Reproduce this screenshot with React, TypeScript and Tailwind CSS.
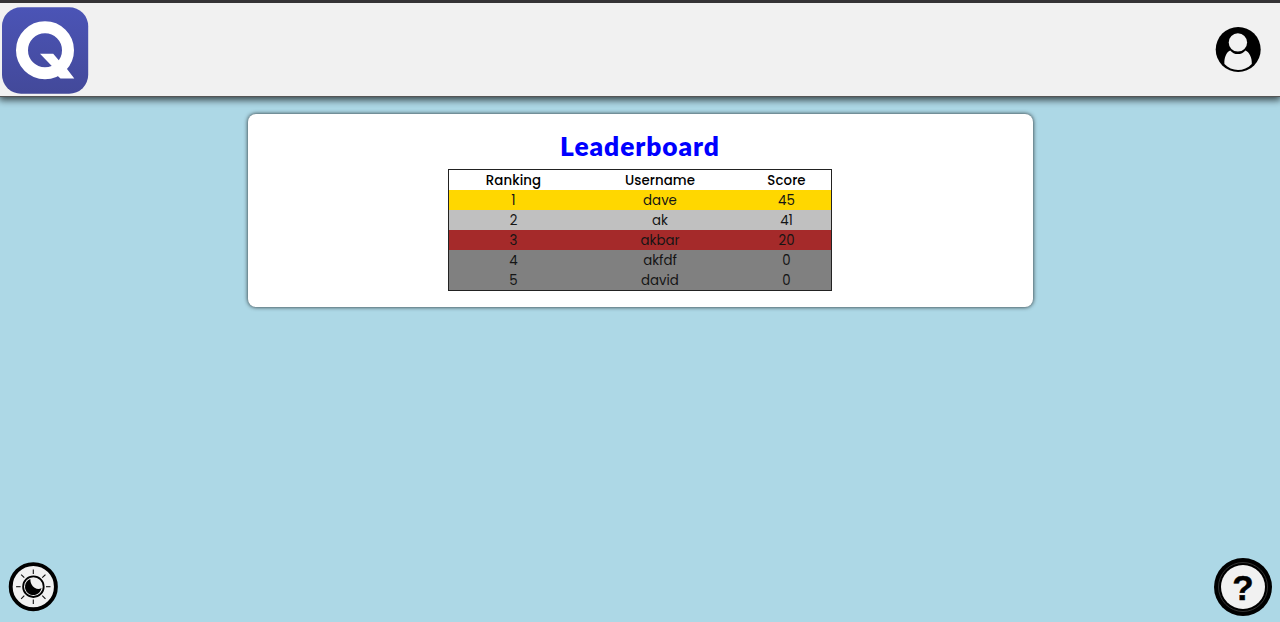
const rows = [
  { name: "dave", score: 45, tone: "bg-[#ffd700]" },
  { name: "ak", score: 41, tone: "bg-[#c0c0c0]" },
  { name: "akbar", score: 20, tone: "bg-[#a52a2a]" },
  { name: "akfdf", score: 0, tone: "bg-[#808080]" },
  { name: "david", score: 0, tone: "bg-[#808080]" },
];

const rays = [0, 45, 90, 135, 180, 225, 270, 315];

function Logo() {
  return (
    <svg width="87" height="87" viewBox="0 0 87 87" role="img" aria-label="Q">
      <defs>
        <linearGradient id="logoFill" x1="0" y1="0" x2="0" y2="1">
          <stop offset="0" stopColor="#4b54b6" />
          <stop offset="1" stopColor="#43499a" />
        </linearGradient>
      </defs>
      <rect x="0" y="0.3" width="86.2" height="86.4" rx="19" fill="url(#logoFill)" />
      <circle cx="43" cy="43.3" r="23" fill="none" stroke="#fff" strokeWidth="12" />
      <path d="M38 46.7H51.2L57 53.4L65 62L72.3 71.5H58.5L52.5 66L49.8 59Z" fill="#fff" />
    </svg>
  );
}

function UserIcon() {
  return (
    <svg width="46" height="46" viewBox="0 0 46 46">
      <circle cx="23.2" cy="22.5" r="22.5" fill="#000" />
      <path
        d="M9.4 37C9.1 30.5 11.4 25 15.2 23.5C17.2 26 19.7 27.1 22.8 27.1C25.9 27.1 28.5 26 30.4 23.5C34.2 25 37.1 30.5 36.8 37C33 41.1 28 43 23 43C18 43 12.9 40.9 9.4 37Z"
        fill="#f1f1f1"
      />
      <circle cx="22.9" cy="15.4" r="9.2" fill="#f1f1f1" />
    </svg>
  );
}

function ThemeIcon() {
  return (
    <svg width="50" height="50" viewBox="0 0 50 50">
      <circle cx="25.3" cy="24.7" r="22.6" fill="#f1f1f1" stroke="#000" strokeWidth="3.9" />
      {rays.map((angle) => (
        <path
          key={angle}
          d="M25.3 7.5V12"
          stroke="#111"
          strokeWidth="1.1"
          transform={`rotate(${angle} 25.3 24.7)`}
        />
      ))}
      <circle cx="25.4" cy="24.7" r="10.3" fill="#f1f1f1" stroke="#000" strokeWidth="1.8" />
      <path d="M22.3 17A8.3 8.3 0 1 0 33.5 26.1Q30.5 28 26.6 25.8Q22.4 23 22.3 17Z" fill="#000" />
    </svg>
  );
}

export default function App() {
  return (
    <div className="flex h-[622px] flex-col overflow-hidden bg-[#add8e6]">
      <header className="relative flex h-[97px] shrink-0 items-center justify-between border-t-[3px] border-b border-t-[#353336] border-b-[#555] bg-[#f1f1f1] pt-px pr-[19px] pl-[2px] shadow-[0_2px_7px_1px_#000000b0]">
        <Logo />
        <button aria-label="Account">
          <UserIcon />
        </button>
      </header>

      <main className="mx-auto mt-[17px] flex h-[193px] w-[785px] shrink-0 flex-col items-center rounded-lg bg-white shadow-[0_0_4px_#000000d0]">
        <h1 className="mt-[14px] h-[41px] text-[26.3px] leading-9 font-extrabold tracking-[0.95px] text-[#0000ff] [font-family:'Gill_Sans',Lato,sans-serif]">
          Leaderboard
        </h1>
        <table className="w-[384px] table-fixed border-separate border-spacing-0 border border-[#222] text-center text-[13.33px] leading-[18px] text-[#151515] [font-family:Poppins,Inter,sans-serif]">
          <colgroup>
            <col className="w-[129px]" />
            <col className="w-[164px]" />
            <col className="w-[89px]" />
          </colgroup>
          <thead>
            <tr className="h-5 text-black">
              <th className="p-0 pt-[2px] font-medium tracking-[0.1px]">Ranking</th>
              <th className="p-0 pt-[2px] font-medium tracking-[0.1px]">Username</th>
              <th className="p-0 pt-[2px] font-medium tracking-[0.1px]">Score</th>
            </tr>
          </thead>
          <tbody>
            {rows.map((row, index) => (
              <tr key={row.name} className={`h-5 ${row.tone}`}>
                <td className="p-0 pt-[2px]">{index + 1}</td>
                <td className="p-0 pt-[2px]">{row.name}</td>
                <td className="p-0 pt-[2px]">{row.score}</td>
              </tr>
            ))}
          </tbody>
        </table>
      </main>

      <footer className="mt-auto flex items-center justify-between pr-2 pb-[6px] pl-2">
        <button aria-label="Toggle theme">
          <ThemeIcon />
        </button>
        <button
          aria-label="Help"
          className="flex size-[58px] items-center justify-center rounded-full bg-black"
        >
          <span className="flex size-[50px] items-center justify-center rounded-full border border-[#333]">
            <span className="flex size-[44px] shrink-0 items-center justify-center rounded-full bg-[#f1f1f1] text-[35px] leading-none font-bold text-black [-webkit-text-stroke:0.5px_#000] [font-family:'Liberation_Sans',Arial,sans-serif]">
              ?
            </span>
          </span>
        </button>
      </footer>
    </div>
  );
}
